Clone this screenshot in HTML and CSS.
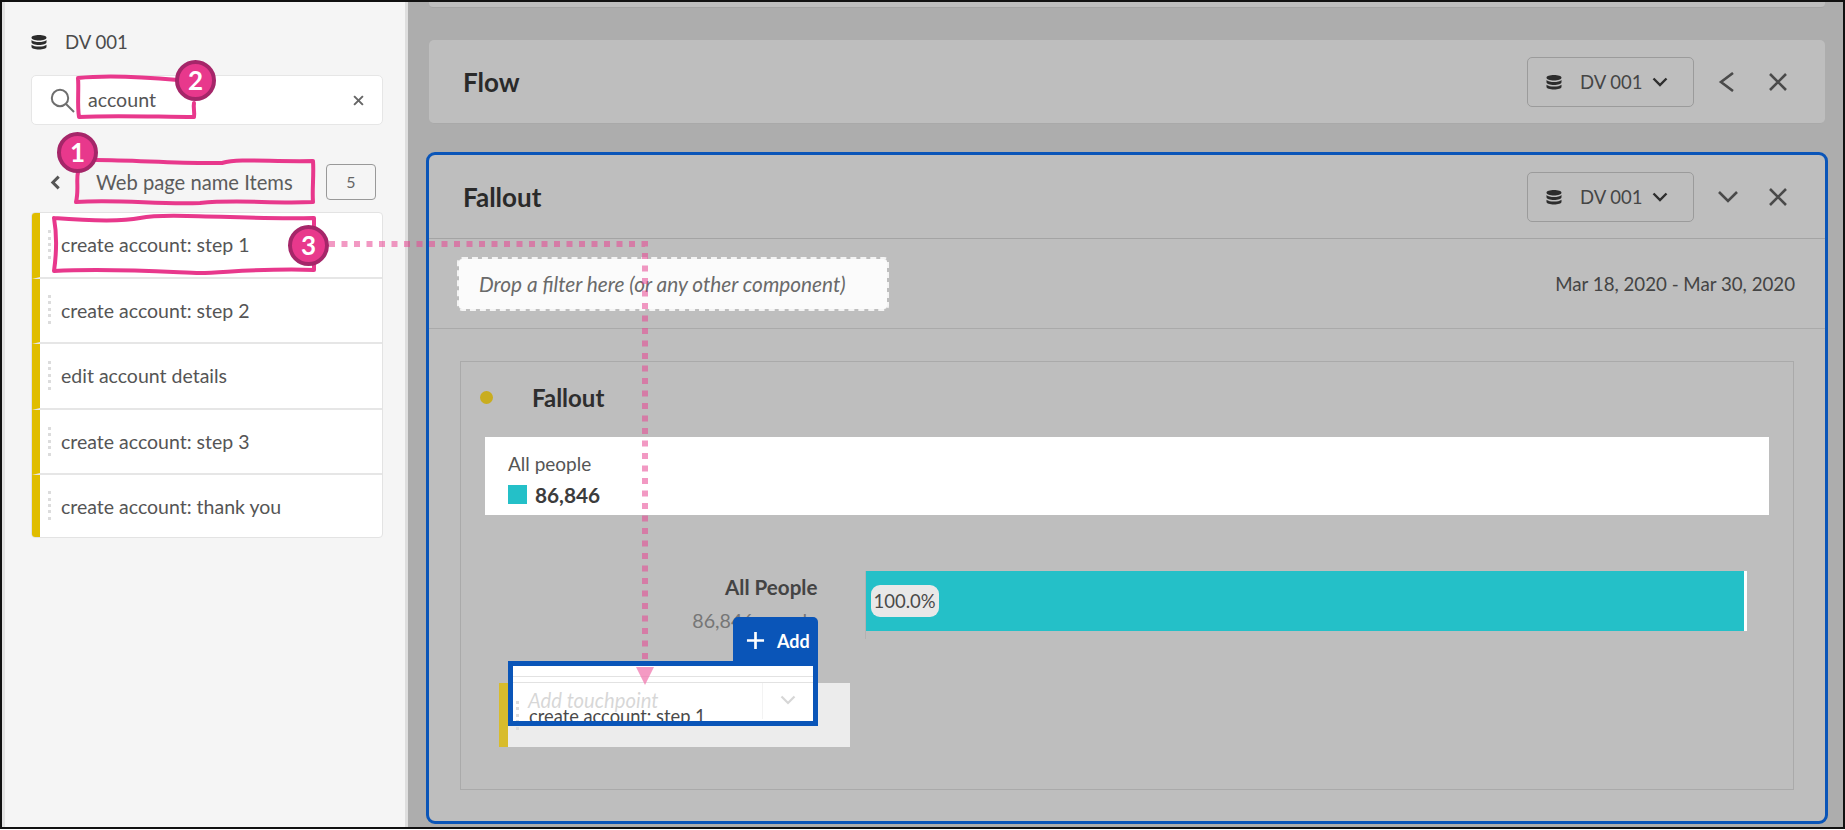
FILE: index.html
```html
<!DOCTYPE html>
<html lang="en">
<head>
  <meta charset="UTF-8">
  <title>Fallout touchpoint</title>
  <link rel="stylesheet" href="styles.css">
</head>
<body>
<div class="frame">

  <aside class="rail">
    <div class="rail-title">
      <svg class="db-icon" viewBox="0 0 16 16"><use href="#db"/></svg>
      <span>DV 001</span>
    </div>

    <div class="search">
      <svg class="search-icon" viewBox="0 0 25 25"><circle cx="10" cy="10" r="8.2"/><path d="M16 16l8 8"/></svg>
      <span class="search-text">account</span>
      <svg class="search-clear" viewBox="0 0 10 10"><path d="M1 1l8 8M9 1l-8 8"/></svg>
    </div>

    <div class="crumb">
      <svg class="crumb-back" viewBox="0 0 10 14"><path d="M8 1.5L2.5 7 8 12.5"/></svg>
      <span class="crumb-name">Web page name Items</span>
      <span class="crumb-count">5</span>
    </div>

    <ul class="items">
      <li class="item"><span class="grip"></span>create account: step 1</li>
      <li class="item"><span class="grip"></span>create account: step 2</li>
      <li class="item"><span class="grip"></span>edit account details</li>
      <li class="item"><span class="grip"></span>create account: step 3</li>
      <li class="item"><span class="grip"></span>create account: thank you</li>
    </ul>
  </aside>

  <main class="main">
    <div class="stub"></div>

    <section class="panel panel-flow">
      <h2 class="panel-title">Flow</h2>
      <div class="source"><svg class="db-icon" viewBox="0 0 16 16"><use href="#db"/></svg><span>DV 001</span><svg class="source-arrow" viewBox="0 0 16 10"><path d="M1.5 1.5L8 8l6.500-6.500"/></svg></div>
      <svg class="tool tool-first" viewBox="0 0 20 20"><path d="M15 1L3 10l12 9"/></svg>
      <svg class="tool" viewBox="0 0 20 20"><path d="M2 2l16 16M18 2L2 18"/></svg>
    </section>

    <section class="panel panel-fallout">
      <header class="fallout-head">
        <h2 class="panel-title">Fallout</h2>
        <div class="source"><svg class="db-icon" viewBox="0 0 16 16"><use href="#db"/></svg><span>DV 001</span><svg class="source-arrow" viewBox="0 0 16 10"><path d="M1.5 1.5L8 8l6.500-6.500"/></svg></div>
        <svg class="tool tool-first" viewBox="0 0 20 20"><path d="M1 5l9 9 9-9"/></svg>
        <svg class="tool" viewBox="0 0 20 20"><path d="M2 2l16 16M18 2L2 18"/></svg>
      </header>

      <div class="filter-row">
        <div class="drop-zone">Drop a filter here (or any other component)</div>
        <div class="dates">Mar 18, 2020 - Mar 30, 2020</div>
      </div>

      <div class="viz-wrap">
        <div class="viz">
          <div class="viz-title"><span class="viz-dot"></span><h3>Fallout</h3></div>

          <div class="legend">
            <div class="legend-name">All people</div>
            <div class="legend-value"><span class="swatch"></span><b>86,846</b></div>
          </div>

          <div class="chart-row">
            <div class="chart-label">
              <b>All People</b>
              <span>86,846 people</span>
            </div>
            <div class="bar-track">
              <div class="bar"><span class="bar-pct">100.0%</span></div>
            </div>
          </div>

          <!-- touchpoint being dropped -->
          <div class="touch">
            <div class="touch-box">
              <div class="touch-lines"></div>
              <div class="touch-input">
                <span class="touch-hint">Add touchpoint</span>
                <span class="touch-arrow"><svg viewBox="0 0 16 10"><path d="M1.500 1.500L8 8l6.500-6.500"/></svg></span>
              </div>
            </div>
            <div class="ghost"><span class="grip"></span>create account: step 1</div>
            <div class="touch-frame"></div>
            <div class="add-tab">
              <svg viewBox="0 0 20 20"><path d="M10 1v18M1 10h18"/></svg>Add
            </div>
          </div>
        </div>
      </div>
    </section>
  </main>

  <!-- callouts drawn on top of the screenshot -->
  <svg class="marks" viewBox="0 0 1845 830">
    <path class="scribble" d="M78 78C105 75 145 77 178 80M194 103C193 108 195 113 194 117C160 117 115 115 79 117C77 105 79 90 78 78"/>
    <path class="scribble" d="M96 160C135 160 180 164 222 163C240 158 270 162 313 161C314 175 312 190 313 202C270 204 240 199 200 203C160 205 120 199 76 202C79 190 76 180 78 172"/>
    <path class="scribble" d="M54 218C80 220 120 222 140 218C170 212 240 220 314 218L314 228M314 262L314 270C270 268 230 272 200 273C170 272 110 268 54 271C57 250 57 235 54 218"/>
    <path class="dots" d="M329 244H645V662"/>
    <path class="arrow" d="M636 667H654L645 685Z"/>
  </svg>
  <div class="badge badge-1">1</div>
  <div class="badge badge-2">2</div>
  <div class="badge badge-3">3</div>

  <svg class="defs" width="0" height="0">
    <symbol id="db" viewBox="0 0 16 16">
      <path d="M8 1C4 1 .5 2 .5 3.700S4 6.400 8 6.400s7.500-1 7.500-2.700S12 1 8 1zM.5 6v2.300C.5 10 4 11 8 11s7.500-1 7.500-2.700V6C14 7.500 11 8 8 8S2 7.500.5 6zm0 4.700V13C.5 14.500 4 15.500 8 15.500s7.500-1 7.500-2.500v-2.300C14 12 11 12.600 8 12.600S2 12 .5 10.700z"/>
    </symbol>
  </svg>
</div>
</body>
</html>
```

FILE: styles.css
```css
* {
  box-sizing: border-box;
}
html, body {
  margin: 0;
  background: #fff;
}
body {
  font-family: Lato, "Open Sans", Arial, sans-serif;
  color: #505050;
  overflow: hidden;
}
h2, h3, ul {
  margin: 0;
  padding: 0;
}
.defs {
  position: absolute;
}

.frame {
  position: relative;
  display: flex;
  width: 1845px;
  height: 829px;
  border: 2px solid #111;
  overflow: hidden;
}

/* Left rail */
.rail {
  flex: none;
  width: 406px;
  padding: 0 22px 0 26px;
  background: #f5f5f5;
  border-left: 3px solid #e2e2e2;
  border-right: 3px solid #dedede;
}
.rail-title {
  display: flex;
  align-items: center;
  height: 36px;
  margin: 22px 0 15px;
  font-size: 18.600px;
  color: #4b4b4b;
}
.db-icon {
  width: 16px;
  height: 16px;
  fill: #2c2c2c;
}
.rail-title .db-icon {
  margin-right: 18px;
}
.search {
  display: flex;
  align-items: center;
  height: 50px;
  padding: 0 18px 0 18px;
  background: #fff;
  border: 1px solid #e6e6e6;
  border-radius: 5px;
}
.search-icon {
  width: 25px;
  height: 25px;
  fill: none;
  stroke: #6e6e6e;
  stroke-width: 2;
}
.search-text {
  flex: 1;
  margin: 0 0 2px 13px;
  font-size: 19.600px;
  color: #555;
}
.search-clear {
  width: 11px;
  height: 11px;
  fill: none;
  stroke: #666;
  stroke-width: 1.800;
}
.crumb {
  display: flex;
  align-items: center;
  height: 36px;
  margin: 39px 0 12px;
  padding-left: 19px;
  font-size: 20.200px;
}
.crumb-back {
  width: 11px;
  height: 15px;
  fill: none;
  stroke: #555;
  stroke-width: 2.800;
}
.crumb-name {
  flex: 1;
  margin-left: 35px;
  color: #5c5c5c;
}
.crumb-count {
  width: 50px;
  height: 36px;
  margin-right: 7px;
  line-height: 33px;
  text-align: center;
  font-size: 16px;
  color: #666;
  border: 1px solid #999;
  border-radius: 4px;
}
.items {
  list-style: none;
  background: #fff;
  border: 1px solid #e3e3e3;
  border-radius: 4px;
  overflow: hidden;
}
.item {
  display: flex;
  align-items: center;
  height: 65.600px;
  font-size: 19.500px;
  color: #555;
  border-left: 8px solid #e0bd00;
  border-bottom: 2px solid #e6e6e6;
}
.item:last-child {
  border-bottom: 0;
  height: 62px;
}
.grip {
  flex: none;
  width: 3px;
  height: 30px;
  margin: 0 10px 0 8px;
  background: repeating-linear-gradient(#dcdcdc 0 3px, transparent 3px 6.500px);
}

/* Main area */
.main {
  flex: 1;
  min-width: 0;
  padding: 0 15px 0 18px;
  background: #adadad;
}
.stub {
  height: 6px;
  margin: 0 3px;
  background: #bebebe;
  border-bottom: 1px solid #a4a4a4;
  border-radius: 0 0 4px 4px;
}
.panel {
  background: #bebebe;
  border-radius: 5px;
}
.panel-flow,
.fallout-head {
  display: flex;
  align-items: center;
}
.panel-flow {
  height: 84px;
  margin: 32px 3px 28px 3px;
  padding: 0 37px 0 34px;
  border-bottom: 1px solid #a9a9a9;
}
.panel-title {
  flex: 1;
  font-size: 26px;
  font-weight: 700;
  color: #2a2a2a;
}
.source {
  display: flex;
  align-items: center;
  width: 167px;
  height: 50px;
  padding-left: 18px;
  font-size: 18.500px;
  color: #454545;
  border: 1px solid #9b9b9b;
  border-radius: 5px;
}
.source span {
  margin-left: 18px;
}
.source-arrow {
  width: 16px;
  height: 10px;
  margin-left: 10px;
  fill: none;
  stroke: #2e2e2e;
  stroke-width: 2.400;
}
.tool {
  width: 20px;
  height: 20px;
  margin-left: 30px;
  fill: none;
  stroke: #4a4a4a;
  stroke-width: 2.600;
}
.tool-first {
  margin-left: 24px;
}
.panel-fallout {
  height: 672px;
  display: flex;
  flex-direction: column;
  border: 3px solid #0a55b8;
  border-radius: 9px;
}
.fallout-head {
  flex: none;
  height: 84px;
  padding: 0 37px 0 34px;
  border-bottom: 1px solid #a4a4a4;
}
.filter-row {
  flex: none;
  display: flex;
  align-items: center;
  justify-content: space-between;
  height: 90px;
  padding: 0 30px 0 28px;
  border-bottom: 1px solid #aaa;
}
.drop-zone {
  width: 432px;
  height: 54px;
  padding-left: 20px;
  line-height: 50px;
  font-size: 20.800px;
  font-style: italic;
  color: #6a6a6a;
  background: #fbfbfb;
  background-clip: padding-box;
  border: 2px dashed #f4f4f4;
  border-radius: 5px;
}
.dates {
  font-size: 18.700px;
  color: #444;
}
.viz-wrap {
  flex: 1;
  padding: 32px 31px 30px 31px;
}
.viz {
  position: relative;
  height: 429px;
  padding: 0 24px 0 24px;
  border: 1px solid #aaa;
}
.viz-title {
  display: flex;
  align-items: center;
  height: 70px;
  margin: 0 0 5px -5px;
}
.viz-title h3 {
  margin-left: 39px;
  font-size: 24px;
  font-weight: 700;
  color: #2e2e2e;
}
.viz-dot {
  width: 13px;
  height: 13px;
  background: #c9ad1f;
  border-radius: 50%;
}
.legend {
  height: 78px;
  padding: 15px 23px 0;
  background: #fff;
}
.legend-name {
  font-size: 19px;
  color: #555;
}
.legend-value {
  display: flex;
  align-items: center;
  margin-top: 7px;
  font-size: 20.800px;
  color: #3c3c3c;
}
.swatch {
  width: 19px;
  height: 19px;
  margin-right: 8px;
  background: #24c0c8;
}
.chart-row {
  display: flex;
  margin-top: 56px;
}
.chart-label {
  flex: none;
  width: 332.500px;
  display: flex;
  flex-direction: column;
  align-items: flex-end;
  font-size: 20.600px;
}
.chart-label b {
  margin-top: 4px;
  color: #444;
}
.chart-label span {
  margin-top: 10px;
  font-size: 19.700px;
  color: #767676;
}
.bar-track {
  width: 882px;
  height: 68px;
  margin-left: 47px;
  border-left: 1px solid #b2b2b2;
}
.bar {
  display: flex;
  align-items: center;
  height: 60px;
  padding-left: 5px;
  background: #24c0c8;
  border-right: 3px solid #fff;
}
.bar-pct {
  height: 32px;
  padding: 0 3px;
  line-height: 32px;
  font-size: 18.500px;
  color: #4a4a4a;
  background: #e8e8e8;
  border-radius: 9px;
}

/* Touchpoint while a component is dragged on to it */
.touch {
  position: absolute;
  left: 38px;
  top: 254px;
  width: 351px;
  height: 131px;
}
.touch-box {
  position: absolute;
  left: 9px;
  top: 45px;
  width: 310px;
  height: 65px;
  padding-top: 5px;
  background: #fff;
}
.touch-lines {
  height: 7px;
  margin-top: 10px;
  border-top: 1px solid #e2e2e2;
  border-bottom: 1px solid #e2e2e2;
}
.touch-input {
  display: flex;
  height: 36px;
}
.touch-hint {
  flex: 1;
  padding-left: 20px;
  font-size: 20.300px;
  font-style: italic;
  line-height: 34px;
  color: #7a7a7a;
}
.touch-arrow {
  width: 56px;
  padding: 4px 0 0 17px;
  border-left: 1px solid #d8d8d8;
}
.touch-arrow svg {
  display: block;
  width: 16px;
  height: 10px;
  margin-top: 8px;
  fill: none;
  stroke: #777;
  stroke-width: 2.200;
}
.ghost {
  position: absolute;
  left: 0;
  top: 67px;
  width: 351px;
  height: 64px;
  display: flex;
  align-items: center;
  padding-top: 2px;
  font-size: 18.300px;
  color: #4a4a4a;
  background: rgba(255, 255, 255, .7);
  border-left: 9px solid #d8bc2c;
}
.touch-frame {
  position: absolute;
  left: 9px;
  top: 45px;
  width: 310px;
  height: 65px;
  border: 5px solid #0a55b8;
}
.add-tab {
  position: absolute;
  left: 234px;
  top: 1px;
  width: 85px;
  height: 45px;
  display: flex;
  align-items: center;
  gap: 12px;
  padding: 2px 0 0 13px;
  font-size: 18px;
  font-weight: 700;
  color: #fff;
  background: #0a55b8;
  border-radius: 5px 5px 0 0;
}
.add-tab svg {
  width: 19px;
  height: 19px;
  fill: none;
  stroke: #fff;
  stroke-width: 2.800;
}

/* Callouts */
.marks {
  position: absolute;
  left: -2px;
  top: -2px;
  width: 1845px;
  height: 830px;
  fill: none;
}
.scribble {
  stroke: #e8388c;
  stroke-width: 4;
  stroke-linecap: round;
  stroke-linejoin: round;
}
.dots {
  stroke: rgba(232, 70, 145, .55);
  stroke-width: 6;
  stroke-dasharray: 6 6.500;
}
.arrow {
  fill: rgba(240, 120, 175, .75);
}
.badge {
  position: absolute;
  width: 41px;
  height: 41px;
  line-height: 33px;
  text-align: center;
  font-size: 26px;
  font-weight: 700;
  color: #fff;
  background: #e8388c;
  border: 4px solid #a52669;
  border-radius: 50%;
}
.badge-1 { left: 55px; top: 130px; }
.badge-2 { left: 173px; top: 58px; }
.badge-3 { left: 286px; top: 223px; }
```
